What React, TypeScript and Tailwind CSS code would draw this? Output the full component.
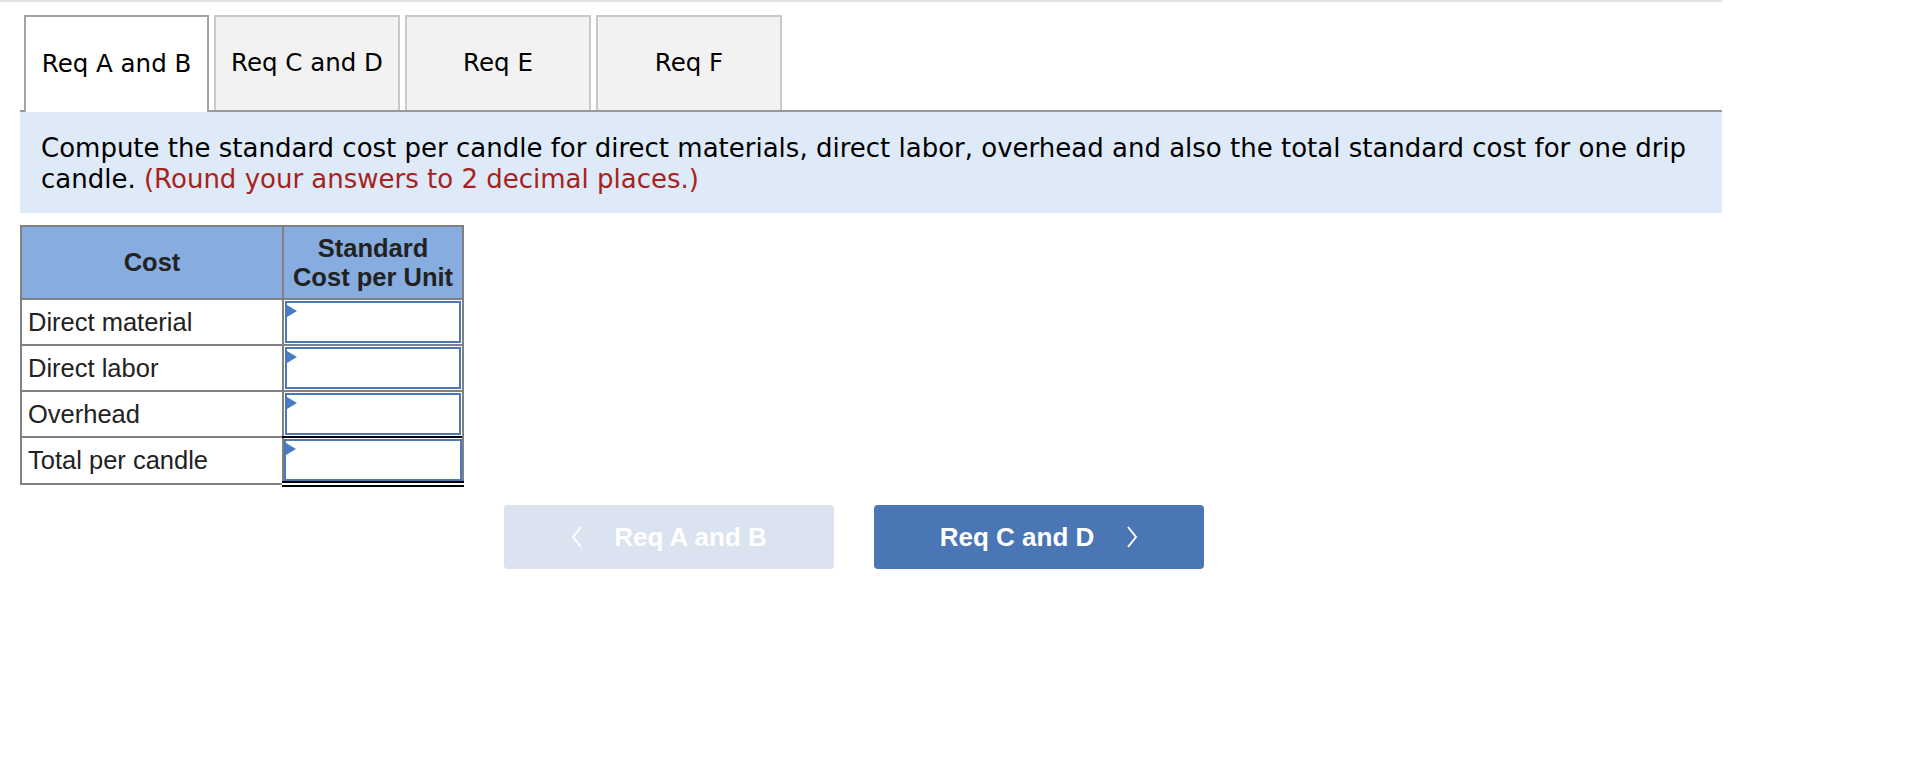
const tabs = ["Req A and B", "Req C and D", "Req E", "Req F"];

const rows = ["Direct material", "Direct labor", "Overhead", "Total per candle"];

function Marker() {
  return (
    <span className="absolute left-0 top-[2px] w-0 h-0 border-y-[6px] border-y-transparent border-l-[10px] border-l-[#4a7cc6]" />
  );
}

function Chevron({ dir }: { dir: "left" | "right" }) {
  return (
    <svg width="12" height="22" viewBox="0 0 12 22" fill="none">
      <polyline
        points={dir === "left" ? "10,1 2,11 10,21" : "2,1 10,11 2,21"}
        stroke="white"
        strokeWidth="2"
        strokeLinejoin="miter"
      />
    </svg>
  );
}

export default function App() {
  return (
    <div className="w-[1932px] h-[784px] bg-white">
      <div className="w-[1722px] border-t-2 border-[#e3e3e3] pl-[20px]">
        {/* tabs */}
        <div
          className="mt-[13px] flex items-end gap-[5px] pl-[4px] border-b-2 border-[#999999]"
          style={{ fontFamily: '"DejaVu Sans", Verdana, sans-serif' }}
        >
          {tabs.map((t, i) =>
            i === 0 ? (
              <div
                key={t}
                className="w-[185px] h-[97px] -mb-[2px] flex items-center justify-center bg-white border-2 border-b-0 border-[#a4a4a4] text-[24.5px] text-black"
              >
                {t}
              </div>
            ) : (
              <div
                key={t}
                className="w-[186px] h-[95px] flex items-center justify-center bg-[#f2f2f2] border-2 border-b-0 border-[#c9c9c9] text-[24.5px] text-black"
              >
                {t}
              </div>
            )
          )}
        </div>

        {/* instructions */}
        <div
          className="bg-[#deeaf7] pl-[21px] pr-[10px] pt-[21px] pb-[18px] text-[26px] leading-[31px] text-black"
          style={{ fontFamily: '"DejaVu Sans", Verdana, sans-serif' }}
        >
          Compute the standard cost per candle for direct materials, direct labor, overhead and also the total
          standard cost for one drip candle.{" "}
          <span className="text-[#a8221c]">(Round your answers to 2 decimal places.)</span>
        </div>

        {/* table */}
        <table
          className="mt-[12px] border-collapse border-2 border-[#808080] text-[25.5px] text-[#222]"
          style={{ fontFamily: '"Liberation Sans", Arial, sans-serif' }}
        >
          <thead>
            <tr className="bg-[#87ade0] h-[73px]">
              <th className="w-[262px] border-2 border-[#808080] font-bold text-center">Cost</th>
              <th className="w-[180px] border-2 border-[#808080] font-bold text-center leading-[29px]">
                Standard
                <br />
                Cost per Unit
              </th>
            </tr>
          </thead>
          <tbody>
            {rows.map((r, i) => {
              const last = i === rows.length - 1;
              return (
                <tr key={r} className={last ? "h-[47px]" : "h-[46px]"}>
                  <td className="border-2 border-[#808080] pl-[6px] font-normal">{r}</td>
                  <td
                    className={
                      last
                        ? "border-2 border-[#808080] border-t-black border-b-[6px] border-b-black border-double p-0"
                        : "border-2 border-[#808080] p-[1px]"
                    }
                  >
                    <div className="relative h-[42px] bg-white border-2 border-[#4c77b9]">
                      <Marker />
                    </div>
                  </td>
                </tr>
              );
            })}
          </tbody>
        </table>

        {/* nav buttons */}
        <div
          className="mt-[18px] ml-[484px] flex gap-[40px] text-[26px] font-bold text-white"
          style={{ fontFamily: '"Liberation Sans", Arial, sans-serif' }}
        >
          <button className="w-[330px] h-[64px] rounded-[4px] bg-[#dae3ef] flex items-center justify-center gap-[31px]">
            <Chevron dir="left" />
            <span>Req A and B</span>
          </button>
          <button className="w-[330px] h-[64px] rounded-[4px] bg-[#4a76b5] flex items-center justify-center gap-[32px]">
            <span>Req C and D</span>
            <Chevron dir="right" />
          </button>
        </div>
      </div>
    </div>
  );
}
